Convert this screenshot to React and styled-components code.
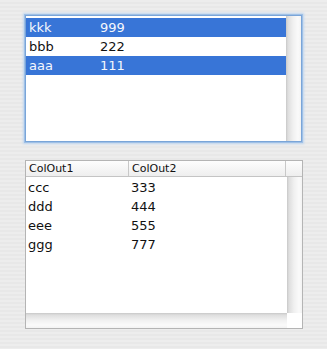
import React from "react";
import styled, { createGlobalStyle } from "styled-components";

const Global = createGlobalStyle`
  html, body {
    margin: 0;
    padding: 0;
  }
  body {
    width: 327px;
    height: 349px;
    overflow: hidden;
    font-family: "DejaVu Sans", "Liberation Sans", sans-serif;
    background: repeating-linear-gradient(
      to bottom,
      #ededed 0px,
      #ededed 2px,
      #e8e8e8 2px,
      #e8e8e8 4px
    );
  }
`;

const topRows = [
  { name: "kkk", value: "999", selected: true },
  { name: "bbb", value: "222", selected: false },
  { name: "aaa", value: "111", selected: true },
];

const tableRows = [
  ["ccc", "333"],
  ["ddd", "444"],
  ["eee", "555"],
  ["ggg", "777"],
];

class App extends React.Component {
  render() {
    return (
      <Page>
        <Global />
        <ListBox>
          <ListBody>
            {topRows.map((r) => (
              <ListRow key={r.name} selected={r.selected}>
                <ListCell width={68}>{r.name}</ListCell>
                <ListCell>{r.value}</ListCell>
              </ListRow>
            ))}
          </ListBody>
          <VScroll />
        </ListBox>

        <TableBox>
          <Header>
            <HeadCell width={103}>ColOut1</HeadCell>
            <HeadCell width={157}>ColOut2</HeadCell>
            <HeadCorner />
          </Header>
          <TableMid>
            <TableBody>
              {tableRows.map(([a, b]) => (
                <TableRow key={a}>
                  <TableCell width={103}>{a}</TableCell>
                  <TableCell>{b}</TableCell>
                </TableRow>
              ))}
            </TableBody>
            <VScroll />
          </TableMid>
          <Bottom>
            <HScroll />
            <Corner />
          </Bottom>
        </TableBox>
      </Page>
    );
  }
}

const Page = styled.div`
  display: flex;
  flex-direction: column;
  padding: 15px 0 0 25px;
  gap: 18px;
`;

const ListBox = styled.div`
  width: 275px;
  height: 125px;
  display: flex;
  border: 1px solid #7aa5d8;
  box-shadow: 0 0 0 1px #9fc0e6, 0 0 2px 2px #c0d6ef;
`;

const ListBody = styled.div`
  flex: 1;
  background: #fff;
  padding-top: 2px;
`;

const ListRow = styled.div`
  display: flex;
  height: 19px;
  align-items: center;
  font-size: 13px;
  background: ${(p) => (p.selected ? "#3875d7" : "#fff")};
  color: ${(p) => (p.selected ? "#f4f7fc" : "#111")};
`;

const ListCell = styled.div`
  padding-left: 3px;
  width: ${(p) => (p.width ? p.width + "px" : "auto")};
`;

const VScroll = styled.div`
  width: 15px;
  background: linear-gradient(
    to right,
    #c8c8c8 0px,
    #dedede 2px,
    #f0f0f0 7px,
    #fafafa 12px,
    #f3f3f3 15px
  );
`;

const TableBox = styled.div`
  width: 276px;
  height: 167px;
  border: 1px solid #b4b4b4;
  display: flex;
  flex-direction: column;
  background: #fff;
`;

const Header = styled.div`
  display: flex;
  height: 15px;
  border-bottom: 1px solid #c4c4c4;
  background: linear-gradient(to bottom, #fdfdfd, #eeeeee);
  font-size: 11px;
  color: #111;
`;

const HeadCell = styled.div`
  width: ${(p) => p.width}px;
  box-sizing: border-box;
  padding-left: 3px;
  line-height: 15px;
  border-right: 1px solid #c8c8c8;
`;

const HeadCorner = styled.div`
  flex: 1;
`;

const TableMid = styled.div`
  flex: 1;
  display: flex;
`;

const TableBody = styled.div`
  flex: 1;
  padding-top: 1px;
`;

const TableRow = styled.div`
  display: flex;
  height: 19px;
  align-items: center;
  font-size: 13px;
  color: #111;
`;

const TableCell = styled.div`
  padding-left: 2px;
  box-sizing: border-box;
  width: ${(p) => (p.width ? p.width + "px" : "auto")};
`;

const Bottom = styled.div`
  display: flex;
  height: 15px;
`;

const HScroll = styled.div`
  flex: 1;
  background: linear-gradient(
    to bottom,
    #c8c8c8 0px,
    #dedede 2px,
    #f0f0f0 7px,
    #fafafa 12px,
    #f3f3f3 15px
  );
`;

const Corner = styled.div`
  width: 15px;
  background: #fff;
`;

export default App;
